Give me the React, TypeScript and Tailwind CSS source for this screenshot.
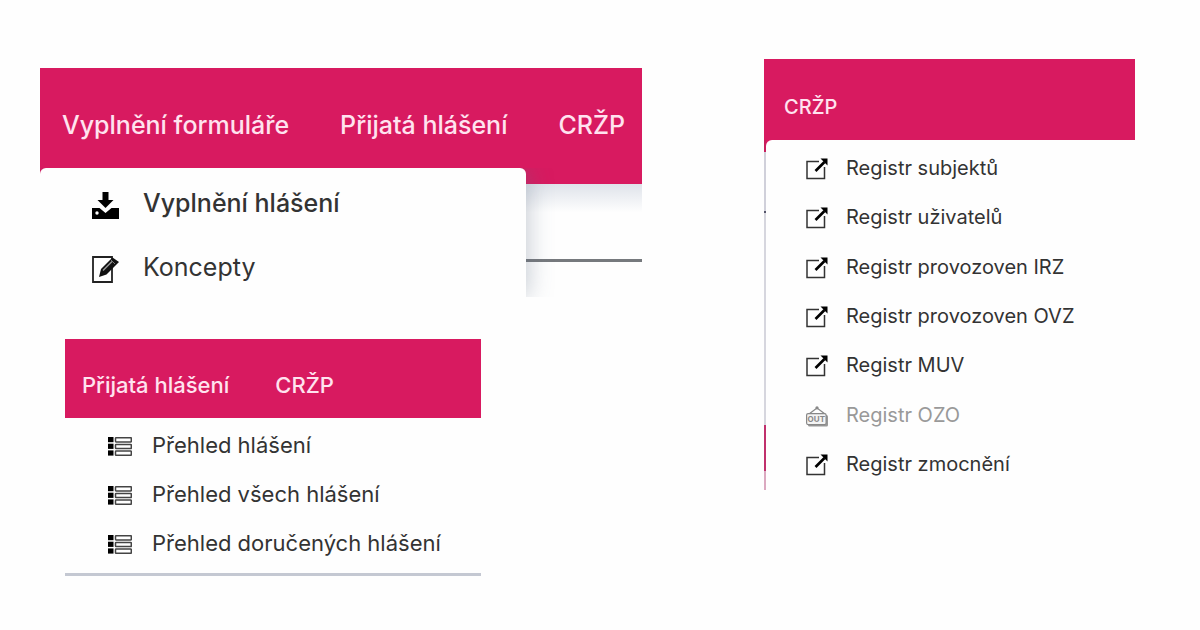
import React from "react";

interface MenuItemProps {
  icon: React.ReactNode;
  label: string;
  className?: string;
  disabled?: boolean;
}

const DownloadIcon = () => (
  <svg viewBox="0 0 27 27" className="w-[27px] h-[27px] shrink-0" aria-hidden="true">
    <path d="M10.5 0h6v8h5L13.500 16 5.500 8h5z" fill="#000" />
    <path d="M0 16h7.500l6 5 6-5H27v11H0z" fill="#000" />
    <circle cx="5" cy="21" r="1.700" fill="#fff" />
  </svg>
);

const DraftIcon = () => (
  <svg viewBox="0 0 27 27" className="w-[27px] h-[27px] shrink-0" aria-hidden="true">
    <path d="M1 1h19v25H1z" fill="#fff" stroke="#222" strokeWidth="1.800" />
    <path d="M7 21l2-8L20.500 1.500 27 6 14.500 18.500z" fill="#111" />
    <path d="M11 14.500L20 5.500" stroke="#999" strokeWidth="1.500" />
    <path d="M19 4l4 4" stroke="#777" strokeWidth="1" />
  </svg>
);

const ListIcon = () => (
  <svg viewBox="0 0 24 19" className="w-6 h-[19px] shrink-0" aria-hidden="true">
    {[0, 6.7, 13.4].map((y) => (
      <g key={y}>
        <rect x="0" y={y} width="5.500" height="5.200" fill="#000" />
        <rect x="7.500" y={y + 0.7} width="15.800" height="4.200" rx="0.600" fill="#fff" stroke="#444" strokeWidth="1.500" />
      </g>
    ))}
  </svg>
);

const ExternalIcon = () => (
  <svg viewBox="0 0 22 22" className="w-[22px] h-[22px] shrink-0" aria-hidden="true">
    <path d="M13 3.500H1v17h17.500V9" fill="none" stroke="#333" strokeWidth="1.500" />
    <path d="M9.500 13L18.500 4" stroke="#000" strokeWidth="2.600" />
    <path d="M14.500 0.500H21.500V7.500z" fill="#000" />
  </svg>
);

const OutIcon = () => (
  <svg viewBox="0 0 22 22" className="w-[22px] h-[22px] shrink-0" aria-hidden="true">
    <path d="M3 9l8-6 8 6" fill="none" stroke="#888" strokeWidth="1.200" />
    <circle cx="11" cy="2.800" r="1.600" fill="#888" />
    <rect x="2" y="10" width="20" height="11.500" rx="1.500" fill="#999" />
    <rect x="0.600" y="8.600" width="19.500" height="11" rx="1.500" fill="#f4f4f4" stroke="#888" strokeWidth="1.200" />
    <text x="10.300" y="17.200" textAnchor="middle" fontSize="8" fontWeight="700" fill="#888">OUT</text>
  </svg>
);

const MenuItem = ({ icon, label, className = "", disabled = false }: MenuItemProps) => (
  <li className="flex">
    <a
      href="#"
      aria-disabled={disabled}
      className={`flex flex-1 items-center whitespace-nowrap ${disabled ? "text-[#999]" : "text-[#333]"} ${className}`}
    >
      {icon}
      <span className="pb-0.5">{label}</span>
    </a>
  </li>
);

const registers = [
  { label: "Registr subjektů" },
  { label: "Registr uživatelů" },
  { label: "Registr provozoven IRZ" },
  { label: "Registr provozoven OVZ" },
  { label: "Registr MUV" },
  { label: "Registr OZO", disabled: true },
  { label: "Registr zmocnění" },
];

const reports = ["Přehled hlášení", "Přehled všech hlášení", "Přehled doručených hlášení"];

export default function App() {
  return (
    <main className="grid min-h-screen grid-cols-[602fr_371fr] items-start gap-[122px] bg-[#fefefe] pl-10 pr-[65px] font-['Inter',sans-serif]">
      <div className="min-w-0 pt-[68px]">
        <section>
          <nav className="flex h-[116px] items-center gap-[51px] whitespace-nowrap bg-[#d81a60] pl-[22px] text-[25px] font-medium text-[#ffe3ef]">
            <a href="#">Vyplnění formuláře</a>
            <a href="#">Přijatá hlášení</a>
            <a href="#">CRŽP</a>
          </nav>
          {/* the open menu runs past the visible part of the page */}
          <div className="-mt-4 flex max-h-[129px] overflow-hidden">
            <ul className="z-10 w-[486px] rounded-t-md bg-[#fefefe] pt-[5px] shadow-[2px_0_24px_rgba(90,105,130,0.35)]">
              <MenuItem
                icon={<DownloadIcon />}
                label="Vyplnění hlášení"
                className="h-16 gap-6 pl-[52px] text-[25px] font-medium"
              />
              <MenuItem icon={<DraftIcon />} label="Koncepty" className="h-16 gap-6 pl-[52px] text-[25px]" />
            </ul>
            <div className="mt-4 flex-1 bg-linear-to-b from-[#dfe3ea] to-[#fefefe] to-25%">
              <div className="h-[78px] border-b-3 border-[#76797d]" />
            </div>
          </div>
        </section>

        <section className="ml-[25px] mt-[42px] w-[416px]">
          <nav className="flex h-[79px] items-center gap-[46px] whitespace-nowrap bg-[#d81a60] pl-[17px] pt-[14px] text-[22px] font-medium text-[#ffe3ef]">
            <a href="#">Přijatá hlášení</a>
            <a href="#">CRŽP</a>
          </nav>
          <ul className="border-b-3 border-[#c4c8d2] pb-1 pt-1">
            {reports.map((label) => (
              <MenuItem key={label} icon={<ListIcon />} label={label} className="h-[49px] gap-5 pl-[43px] text-[22px]" />
            ))}
          </ul>
        </section>
      </div>

      <section className="min-w-0 pt-[59px]">
        <nav className="flex h-[81px] items-center bg-[#d81a60] pl-5 pt-[14px] text-[20px] font-medium text-[#ffe3ef]">
          <a href="#">CRŽP</a>
        </nav>
        <div className="flex">
          <div className="flex w-[2px] flex-col">
            <div className="h-3 bg-[#c81e5c]" />
            <div className="h-[59px] bg-[#d0d0da]" />
            <div className="h-[2px] bg-[#55556a]" />
            <div className="flex-1 bg-[#d6d6de]" />
            <div className="h-[46px] bg-[#c0306c]" />
            <div className="h-[19px] bg-[#dba9c0]" />
          </div>
          <div className="flex-1 bg-[#d81a60]">
            <ul className="grid min-h-[350px] auto-rows-fr rounded-tl-md bg-[#fefefe] pt-[4px]">
              {registers.map((item) => (
                <MenuItem
                  key={item.label}
                  icon={item.disabled ? <OutIcon /> : <ExternalIcon />}
                  label={item.label}
                  disabled={item.disabled}
                  className="gap-[18px] pl-10 text-[20px]"
                />
              ))}
            </ul>
          </div>
        </div>
      </section>
    </main>
  );
}
